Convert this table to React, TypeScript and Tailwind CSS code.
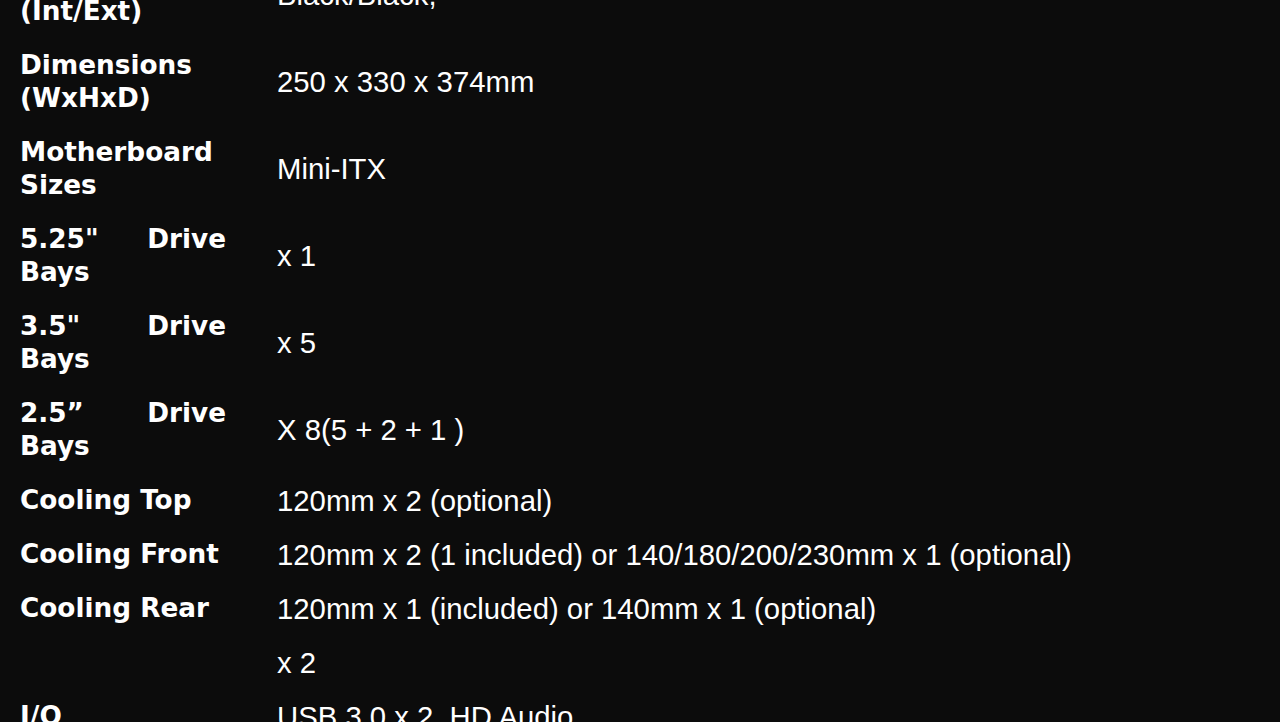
const specs: { label: string; value: string }[] = [
  { label: "Colour (Int/Ext)", value: "Black/Black," },
  { label: "Dimensions (WxHxD)", value: "250 x 330 x 374mm" },
  { label: "Motherboard Sizes", value: "Mini-ITX" },
  { label: "5.25\" Drive Bays", value: "x 1" },
  { label: "3.5\" Drive Bays", value: "x 5" },
  { label: "2.5\u201d Drive Bays", value: "X 8(5 + 2 + 1 )" },
  { label: "Cooling Top", value: "120mm x 2 (optional)" },
  { label: "Cooling Front", value: "120mm x 2 (1 included) or 140/180/200/230mm x 1 (optional)" },
  { label: "Cooling Rear", value: "120mm x 1 (included) or 140mm x 1 (optional)" },
  { label: "", value: "x 2" },
  { label: "I/O", value: "USB 3.0 x 2, HD Audio" },
];

export default function App() {
  return (
    <main className="h-[722px] overflow-hidden bg-[#0c0c0c] text-white">
      <div className="-mt-[49px]">
        {specs.map((row, i) => (
          <div key={i} className="grid grid-cols-[277px_1fr] items-center py-[10.5px]">
            <div className="pl-[20px] pr-[51px] text-justify font-['DejaVu_Sans',Verdana,sans-serif] text-[26.3px] font-bold leading-[33px]">
              {row.label}
            </div>
            <div className="font-['Liberation_Sans',Arial,sans-serif] text-[29.3px] leading-[33px]">
              {row.value}
            </div>
          </div>
        ))}
      </div>
    </main>
  );
}
